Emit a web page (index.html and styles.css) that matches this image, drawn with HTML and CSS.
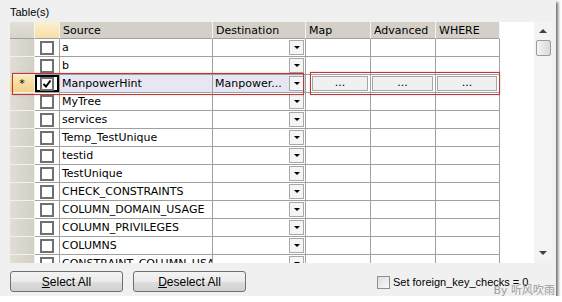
FILE: index.html
```html
<!DOCTYPE html>
<html lang="en">
<head>
    <meta charset="UTF-8">
    <title>Table(s)</title>
    <link rel="stylesheet" href="styles.css">
</head>
<body>
<div class="window">
    <div class="caption">Table(s)</div>
    <div class="grid-box">
        <div class="grid-area">
            <div class="row head">
                <div class="cell rh"></div>
                <div class="cell ck"></div>
                <div class="cell">Source</div>
                <div class="cell">Destination</div>
                <div class="cell">Map</div>
                <div class="cell">Advanced</div>
                <div class="cell">WHERE</div>
            </div>
            <div class="row">
                <div class="cell rh"></div>
                <div class="cell ck"><span class="box"></span></div>
                <div class="cell">a</div>
                <div class="cell dest"><span></span><span class="drop"></span></div>
                <div class="cell"></div><div class="cell"></div><div class="cell"></div>
            </div>
            <div class="row">
                <div class="cell rh"></div>
                <div class="cell ck"><span class="box"></span></div>
                <div class="cell">b</div>
                <div class="cell dest"><span></span><span class="drop"></span></div>
                <div class="cell"></div><div class="cell"></div><div class="cell"></div>
            </div>
            <div class="row current">
                <div class="cell rh">*</div>
                <div class="cell ck focus"><span class="box">
                    <svg width="10" height="10" viewBox="0 0 10 10"><path d="M1.5 5 L4 7.5 L8.5 1.5" fill="none" stroke="#000" stroke-width="2"/></svg>
                </span></div>
                <div class="cell sel">ManpowerHint</div>
                <div class="cell dest sel"><span>Manpower...</span><span class="drop"></span></div>
                <div class="cell"><span class="dots first">...</span></div>
                <div class="cell"><span class="dots">...</span></div>
                <div class="cell"><span class="dots">...</span></div>
            </div>
            <div class="row">
                <div class="cell rh"></div>
                <div class="cell ck"><span class="box"></span></div>
                <div class="cell">MyTree</div>
                <div class="cell dest"><span></span><span class="drop"></span></div>
                <div class="cell"></div><div class="cell"></div><div class="cell"></div>
            </div>
            <div class="row">
                <div class="cell rh"></div>
                <div class="cell ck"><span class="box"></span></div>
                <div class="cell">services</div>
                <div class="cell dest"><span></span><span class="drop"></span></div>
                <div class="cell"></div><div class="cell"></div><div class="cell"></div>
            </div>
            <div class="row">
                <div class="cell rh"></div>
                <div class="cell ck"><span class="box"></span></div>
                <div class="cell">Temp_TestUnique</div>
                <div class="cell dest"><span></span><span class="drop"></span></div>
                <div class="cell"></div><div class="cell"></div><div class="cell"></div>
            </div>
            <div class="row">
                <div class="cell rh"></div>
                <div class="cell ck"><span class="box"></span></div>
                <div class="cell">testid</div>
                <div class="cell dest"><span></span><span class="drop"></span></div>
                <div class="cell"></div><div class="cell"></div><div class="cell"></div>
            </div>
            <div class="row">
                <div class="cell rh"></div>
                <div class="cell ck"><span class="box"></span></div>
                <div class="cell">TestUnique</div>
                <div class="cell dest"><span></span><span class="drop"></span></div>
                <div class="cell"></div><div class="cell"></div><div class="cell"></div>
            </div>
            <div class="row">
                <div class="cell rh"></div>
                <div class="cell ck"><span class="box"></span></div>
                <div class="cell">CHECK_CONSTRAINTS</div>
                <div class="cell dest"><span></span><span class="drop"></span></div>
                <div class="cell"></div><div class="cell"></div><div class="cell"></div>
            </div>
            <div class="row">
                <div class="cell rh"></div>
                <div class="cell ck"><span class="box"></span></div>
                <div class="cell">COLUMN_DOMAIN_USAGE</div>
                <div class="cell dest"><span></span><span class="drop"></span></div>
                <div class="cell"></div><div class="cell"></div><div class="cell"></div>
            </div>
            <div class="row">
                <div class="cell rh"></div>
                <div class="cell ck"><span class="box"></span></div>
                <div class="cell">COLUMN_PRIVILEGES</div>
                <div class="cell dest"><span></span><span class="drop"></span></div>
                <div class="cell"></div><div class="cell"></div><div class="cell"></div>
            </div>
            <div class="row">
                <div class="cell rh"></div>
                <div class="cell ck"><span class="box"></span></div>
                <div class="cell">COLUMNS</div>
                <div class="cell dest"><span></span><span class="drop"></span></div>
                <div class="cell"></div><div class="cell"></div><div class="cell"></div>
            </div>
            <div class="row">
                <div class="cell rh"></div>
                <div class="cell ck"><span class="box"></span></div>
                <div class="cell">CONSTRAINT_COLUMN_USAGE</div>
                <div class="cell dest"><span></span><span class="drop"></span></div>
                <div class="cell"></div><div class="cell"></div><div class="cell"></div>
            </div>
        </div>
        <div class="vscroll">
            <span class="arrow up"></span>
            <span class="thumb"></span>
            <span class="arrow down"></span>
        </div>
        <div class="mark mark-row"></div>
        <div class="mark mark-btns"></div>
    </div>
    <div class="footer">
        <button class="btn"><u>S</u>elect All</button>
        <button class="btn"><u>D</u>eselect All</button>
        <label class="option"><span class="opt-box"></span>Set foreign_key_checks = 0</label>
    </div>
    <div class="watermark">By 听风吹雨</div>
</div>
</body>
</html>
```

FILE: styles.css
```css
body {
    margin: 0;
    background: #fff;
    font-family: "DejaVu Sans", Verdana, sans-serif;
    font-size: 11px;
    color: #000;
}
.window {
    position: relative;
    width: 556px;
    height: 296px;
    background: #f0f0f0;
    box-shadow: 2px 2px 3px rgba(0, 0, 0, 0.6);
}
.caption {
    font-family: "Liberation Sans", Arial, sans-serif;
    font-size: 11px;
    line-height: 14px;
    padding: 5px 0 3px 10px;
}
.grid-box {
    position: relative;
    display: flex;
    margin-left: 10px;
    width: 542px;
    height: 241px;
}
.grid-area {
    width: 524px;
    background: #fff;
    overflow: hidden;
}
.row {
    display: grid;
    grid-template-columns: 25px 25px 153px 93px 65px 65px 64px;
    height: 18px;
}
.cell {
    box-sizing: border-box;
    border-right: 1px solid #a0a0a0;
    border-bottom: 1px solid #a0a0a0;
    padding-left: 2px;
    line-height: 18px;
    white-space: nowrap;
    overflow: hidden;
}
.head {
    height: 17px;
}
.head .cell {
    background: #d4d0c8;
    line-height: 17px;
    padding-left: 3px;
    border-right-color: #f4f4f4;
    border-bottom-color: #a0a0a0;
}
.head .rh {
    background: linear-gradient(#e2e0d8, #d6d3ca);
}
.head .ck {
    background: linear-gradient(#fcf0d0, #f6dfa8);
}
.rh {
    background: linear-gradient(90deg, #e0ded5, #d2cfc5);
    border-right-color: #f2f1ec;
    border-bottom-color: #f2f1ec;
    text-align: center;
    padding-left: 0;
}
.current .rh {
    background: linear-gradient(#fbe9bd, #f3cf86);
}
.ck {
    display: flex;
    align-items: center;
    justify-content: center;
    padding-left: 0;
}
.box {
    box-sizing: border-box;
    width: 14px;
    height: 14px;
    border: 2px solid #707070;
    background: #fff;
    display: flex;
    align-items: center;
    justify-content: center;
}
.focus {
    box-shadow: inset 0 0 0 2px #000;
}
.sel {
    background: #e6e7f3;
}
.dest {
    display: flex;
    justify-content: space-between;
    align-items: center;
}
.drop {
    box-sizing: border-box;
    width: 15px;
    height: 15px;
    margin-right: 1px;
    border: 1px solid #a8a8a8;
    background: #f5f5f5;
    position: relative;
    flex: none;
}
.drop::after {
    content: "";
    position: absolute;
    left: 4px;
    top: 5px;
    border-left: 3px solid transparent;
    border-right: 3px solid transparent;
    border-top: 3px solid #000;
}
.current .cell {
    display: flex;
    align-items: center;
}
.current .rh,
.current .ck {
    justify-content: center;
}
.dots {
    box-sizing: border-box;
    flex: 1;
    height: 15px;
    margin: 0 2px 0 -1px;
    border: 1px solid #a6a6a6;
    background: #f0f0f0;
    text-align: center;
    line-height: 12px;
    font-size: 11px;
}
.dots.first {
    margin-left: 4px;
}
.vscroll {
    width: 18px;
    background: #f3f3f3;
    display: flex;
    flex-direction: column;
    align-items: center;
}
.arrow {
    width: 0;
    height: 0;
    border-left: 4px solid transparent;
    border-right: 4px solid transparent;
}
.arrow.up {
    margin-top: 7px;
    border-bottom: 4px solid #404040;
}
.arrow.down {
    margin-top: auto;
    margin-bottom: 8px;
    border-top: 4px solid #404040;
}
.thumb {
    box-sizing: border-box;
    width: 15px;
    height: 16px;
    margin-top: 7px;
    border: 1px solid #9a9a9a;
    border-radius: 2px;
    background: linear-gradient(90deg, #f4f4f4, #dadada);
}
.mark {
    position: absolute;
    border: 1px solid #b83b3b;
    box-shadow: 0 0 2px rgba(200, 60, 60, 0.35);
}
.mark-row {
    left: 2px;
    top: 51px;
    width: 290px;
    height: 20px;
}
.mark-btns {
    left: 300px;
    top: 50px;
    width: 188px;
    height: 21px;
}
.footer {
    display: flex;
    align-items: center;
    padding: 8px 0 0 10px;
    font-family: "Liberation Sans", Arial, sans-serif;
    font-size: 12px;
}
.btn {
    width: 113px;
    height: 21px;
    margin-right: 10px;
    padding: 0;
    border: 1px solid #707070;
    border-radius: 3px;
    background: linear-gradient(#f3f3f3 0%, #ebebeb 50%, #dedede 51%, #d0d0d0 100%);
    font-family: "Liberation Sans", Arial, sans-serif;
    font-size: 12px;
    color: #000;
}
.option {
    display: flex;
    align-items: center;
    margin-left: 121px;
    margin-top: 1px;
    font-size: 11px;
}
.opt-box {
    box-sizing: border-box;
    width: 13px;
    height: 13px;
    margin-right: 3px;
    border: 1px solid #8e8f8f;
    background: linear-gradient(135deg, #dcdcdc, #fbfbfb);
}
.watermark {
    position: absolute;
    right: 1px;
    bottom: -1px;
    line-height: 13px;
    font-family: "DejaVu Sans", "Noto Sans CJK SC", sans-serif;
    font-size: 11px;
    color: #9c9c9c;
}
```
